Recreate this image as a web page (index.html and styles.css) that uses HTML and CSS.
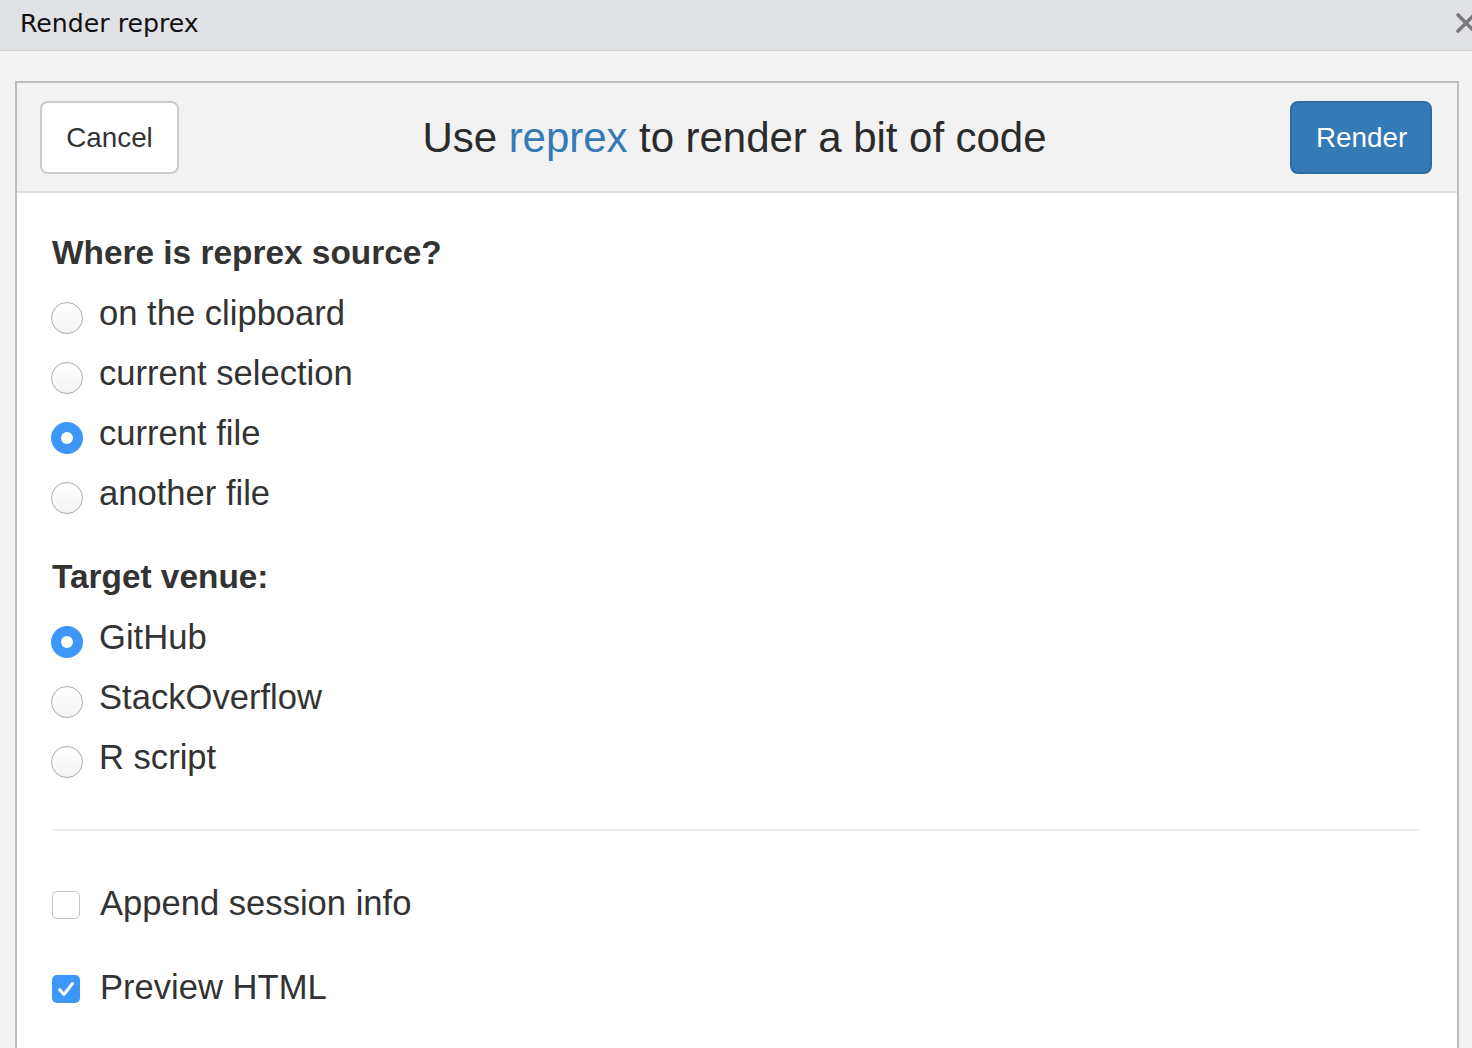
FILE: index.html
```html
<!DOCTYPE html>
<html>
<head>
<meta charset="utf-8">
<title>Render reprex</title>
<link rel="stylesheet" href="styles.css">
</head>
<body>
<div class="titlebar">
  <span class="titlebar-text">Render reprex</span>
  <svg class="close" width="22" height="22" viewBox="0 0 22 22"><path d="M3 3 L19 19 M19 3 L3 19" stroke="#7a7a7a" stroke-width="3.6" stroke-linecap="round"/></svg>
</div>
<div class="stage">
  <div class="gadget">
    <div class="gadget-header">
      <button class="btn btn-default">Cancel</button>
      <h1 class="gadget-title">Use <span class="link">reprex</span> to render a bit of code</h1>
      <button class="btn btn-primary">Render</button>
    </div>
    <div class="gadget-content">
      <div class="group">
        <div class="group-label">Where is reprex source?</div>
        <div class="option"><span class="radio"></span><span class="opt-text">on the clipboard</span></div>
        <div class="option"><span class="radio"></span><span class="opt-text">current selection</span></div>
        <div class="option"><span class="radio checked"></span><span class="opt-text">current file</span></div>
        <div class="option"><span class="radio"></span><span class="opt-text">another file</span></div>
      </div>
      <div class="group">
        <div class="group-label">Target venue:</div>
        <div class="option"><span class="radio checked"></span><span class="opt-text">GitHub</span></div>
        <div class="option"><span class="radio"></span><span class="opt-text">StackOverflow</span></div>
        <div class="option"><span class="radio"></span><span class="opt-text">R script</span></div>
      </div>
      <hr class="divider">
      <div class="checks">
        <div class="option check-option"><span class="checkbox"></span><span class="opt-text">Append session info</span></div>
        <div class="option check-option"><span class="checkbox checked"><svg width="28" height="28" viewBox="0 0 28 28"><path d="M7.5 14.5 L12 19.5 L20.5 8.5" fill="none" stroke="#fff" stroke-width="3" stroke-linecap="round" stroke-linejoin="round"/></svg></span><span class="opt-text">Preview HTML</span></div>
      </div>
    </div>
  </div>
</div>
</body>
</html>
```

FILE: styles.css
```css
html, body {
  margin: 0;
  padding: 0;
  height: 100%;
  overflow: hidden;
}
body {
  background: #f2f3f2;
  font-family: "Liberation Sans", Arial, Helvetica, sans-serif;
  color: #333;
}
.titlebar {
  height: 50px;
  background: #e1e2e6;
  border-bottom: 1px solid #d3d4d7;
  display: flex;
  align-items: center;
  justify-content: space-between;
  padding-left: 20px;
  box-sizing: content-box;
}
.titlebar-text {
  font-family: "DejaVu Sans", sans-serif;
  font-size: 25.2px;
  color: #111;
  position: relative;
  top: -2px;
}
.close {
  margin-right: -5px;
  position: relative;
  top: -2px;
}
.stage {
  padding: 30px 13px 0 15px;
}
.gadget {
  border: 2px solid #bdbdbd;
  border-bottom: none;
  background: #fff;
  height: 1100px;
}
.gadget-header {
  height: 107px;
  background: #f2f2f2;
  border-bottom: 2px solid #e0e0e0;
  display: flex;
  align-items: center;
  justify-content: space-between;
  padding: 1px 25px 0 23px;
}
.btn {
  height: 73px;
  border-radius: 8px;
  border: 2px solid;
  font-family: "Liberation Sans", Arial, sans-serif;
  font-size: 27.8px;
  padding: 0 24px;
  margin: 0;
}
.btn-default {
  background: #fff;
  border-color: #ccc;
  color: #333;
  width: 139px;
}
.btn-primary {
  background: #337ab7;
  border-color: #2e6da4;
  color: #fff;
  width: 142px;
}
.gadget-title {
  margin: 0;
  font-size: 42px;
  font-weight: normal;
  color: #2b2b2b;
  letter-spacing: -0.05px;
  position: relative;
  left: 0;
}
.link {
  color: #337ab7;
}
.gadget-content {
  padding: 36px 37px 0 35px;
}
.group + .group {
  margin-top: 36px;
}
.group-label {
  font-weight: bold;
  font-size: 33.4px;
  line-height: 48px;
  margin-bottom: 12px;
}
.option {
  display: flex;
  align-items: center;
  height: 48px;
  font-size: 34.6px;
  line-height: 48px;
}
.group .option + .option {
  margin-top: 12px;
}
.radio {
  width: 32px;
  height: 32px;
  box-sizing: border-box;
  border-radius: 50%;
  border: 1.5px solid #acacac;
  background: linear-gradient(#ffffff, #f4f4f4);
  margin-left: -1px;
  margin-right: 16px;
  position: relative;
  top: 5px;
  flex: none;
}
.radio.checked {
  border: none;
  background: #3d97f8;
}
.radio.checked::after {
  content: "";
  position: absolute;
  left: 10px;
  top: 10px;
  width: 12px;
  height: 12px;
  border-radius: 50%;
  background: #fff;
}
.opt-text {
  white-space: nowrap;
}
.divider {
  border: none;
  border-top: 2px solid #eee;
  margin: 48px 0 48px 0;
  height: 0;
}
.checks .check-option + .check-option {
  margin-top: 36px;
}
.checkbox {
  width: 28px;
  height: 28px;
  box-sizing: border-box;
  border-radius: 5px;
  border: 1.5px solid #c4c4c4;
  background: #fff;
  margin-left: 0;
  margin-right: 20px;
  position: relative;
  top: 2px;
  flex: none;
}
.checkbox.checked {
  border: none;
  background: #3d97f8;
}
.checkbox svg {
  display: block;
}
```
